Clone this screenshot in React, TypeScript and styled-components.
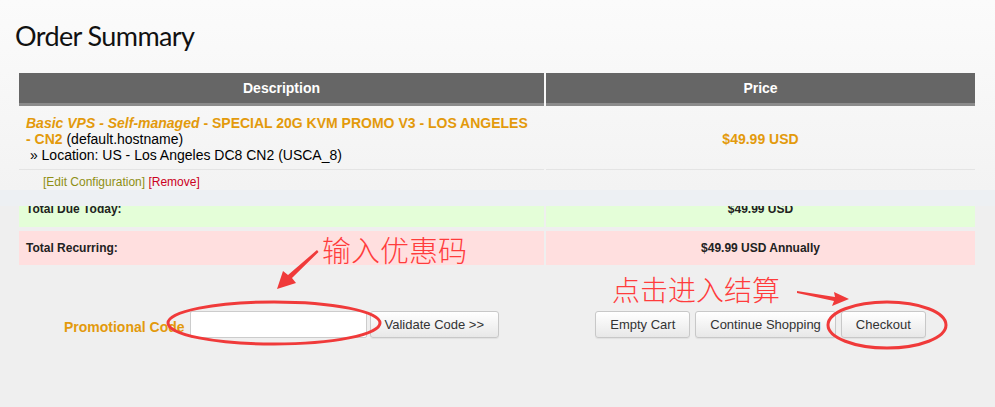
import React from 'react';
import styled, { createGlobalStyle } from 'styled-components';

const GlobalStyle = createGlobalStyle`
  html, body {
    margin: 0;
    padding: 0;
    background: #efefef;
  }
  body {
    font-family: "Liberation Sans", Arial, sans-serif;
  }
`;

const orange = '#e39a0c';

const Page = styled.div`
  position: relative;
  width: 995px;
  height: 407px;
  overflow: hidden;
  background: #efefef;
`;

const Upper = styled.section`
  height: 190px;
  box-sizing: border-box;
  padding-top: 18px;
  background: linear-gradient(#fbfbfb, #f3f3f3);
`;

const Title = styled.h1`
  margin: 0 0 19px 15px;
  font-family: Lato, "Open Sans", sans-serif;
  font-weight: 400;
  font-size: 27px;
  letter-spacing: -0.6px;
  line-height: 36px;
  color: #111;
`;

const Grid = styled.div<{ rowGap?: number }>`
  display: grid;
  grid-template-columns: 525px 429px;
  column-gap: 2px;
  row-gap: ${p => p.rowGap || 0}px;
  width: 956px;
  margin-left: 19px;
`;

const HeadCell = styled.div`
  height: 30px;
  border-bottom: 3px solid #8b8b8b;
  background: #666;
  color: #fff;
  font-weight: bold;
  font-size: 14px;
  display: flex;
  align-items: center;
  justify-content: center;
`;

const ItemCell = styled.div<{ center?: boolean }>`
  height: 64px;
  box-sizing: border-box;
  border-bottom: 1px solid #e4e4e4;
  font-size: 14px;
  line-height: 16px;
  color: #000;
  padding: ${p => (p.center ? '2px 0 0' : '9px 8px 0 7px')};
  display: ${p => (p.center ? 'flex' : 'block')};
  align-items: center;
  justify-content: center;
`;

const ProductGroup = styled.em`
  font-weight: bold;
  color: ${orange};
`;

const ProductName = styled.strong`
  color: ${orange};
`;

const Price = styled.strong`
  color: ${orange};
  font-size: 14px;
`;

const ActionCell = styled.div`
  height: 19px;
  padding: 5px 0 0 24px;
  box-sizing: border-box;
  font-size: 12px;
  line-height: 14px;
`;

const ActionLink = styled.a<{ danger?: boolean }>`
  color: ${p => (p.danger ? '#cc0022' : '#8f8f14')};
  text-decoration: none;
`;

const Band = styled.div`
  height: 16px;
  background: #edf0f3;
`;

const TotalCell = styled.div<{ tone: 'due' | 'recurring'; center?: boolean }>`
  height: ${p => (p.tone === 'due' ? 21 : 34)}px;
  overflow: hidden;
  background: ${p => (p.tone === 'due' ? '#e4fed8' : '#ffdfdf')};
  color: #222;
  font-size: 12px;
  font-weight: bold;
  line-height: 14px;
  padding: 0 7px;
  display: flex;
  align-items: ${p => (p.tone === 'due' ? 'flex-start' : 'center')};
  justify-content: ${p => (p.center ? 'center' : 'flex-start')};
`;

const TotalText = styled.span<{ clipped?: boolean }>`
  margin-top: ${p => (p.clipped ? -4 : 0)}px;
`;

const Lower = styled.div`
  padding-top: 45px;
`;

const ActionGroup = styled.div<{ gap: number }>`
  display: flex;
  align-items: center;
  justify-content: center;
  gap: ${p => p.gap}px;
`;

const PromoLabel = styled.label`
  color: ${orange};
  font-weight: bold;
  font-size: 14px;
  margin-top: 6px;
  margin-right: 2px;
`;

const PromoInput = styled.input`
  width: 177px;
  height: 27px;
  box-sizing: border-box;
  border: 1px solid #ccc;
  border-radius: 2px;
  background: #fff;
  margin: 1px 0 0;
`;

const Button = styled.button`
  height: 27px;
  padding: 0 14px;
  border: 1px solid #c8c8c8;
  border-radius: 3px;
  background: linear-gradient(#ffffff, #e8e8e8);
  box-shadow: 0 1px 1px rgba(0, 0, 0, 0.06);
  color: #333;
  font-family: "Liberation Sans", Arial, sans-serif;
  font-size: 13px;
  cursor: pointer;
`;

const Hint = styled.div<{ size: number }>`
  position: absolute;
  font-family: "Noto Sans CJK SC", sans-serif;
  font-weight: 300;
  font-size: ${p => p.size}px;
  line-height: ${p => p.size}px;
  color: #ff3c3c;
  white-space: nowrap;
`;

const Marks = styled.svg`
  position: absolute;
  left: 0;
  top: 0;
  pointer-events: none;
`;

export default function App() {
  return (
    <Page>
      <GlobalStyle />
      <Upper>
        <Title>Order Summary</Title>
        <Grid>
          <HeadCell>Description</HeadCell>
          <HeadCell>Price</HeadCell>
          <ItemCell>
            <ProductGroup>Basic VPS - Self-managed</ProductGroup>
            <ProductName> - SPECIAL 20G KVM PROMO V3 - LOS ANGELES - CN2</ProductName> (default.hostname)
            <br />
            &nbsp;» Location: US - Los Angeles DC8 CN2 (USCA_8)
          </ItemCell>
          <ItemCell center>
            <Price>$49.99 USD</Price>
          </ItemCell>
          <ActionCell>
            <ActionLink href="#">[Edit Configuration]</ActionLink>{' '}
            <ActionLink href="#" danger>[Remove]</ActionLink>
          </ActionCell>
          <div />
        </Grid>
      </Upper>
      <Band />
      <Grid rowGap={4}>
        <TotalCell tone="due"><TotalText clipped>Total Due Today:</TotalText></TotalCell>
        <TotalCell tone="due" center><TotalText clipped>$49.99 USD</TotalText></TotalCell>
        <TotalCell tone="recurring"><TotalText>Total Recurring:</TotalText></TotalCell>
        <TotalCell tone="recurring" center><TotalText>$49.99 USD Annually</TotalText></TotalCell>
      </Grid>
      <Lower>
        <Grid>
          <ActionGroup gap={3}>
            <PromoLabel htmlFor="promo">Promotional Code</PromoLabel>
            <PromoInput id="promo" type="text" />
            <Button>Validate Code &gt;&gt;</Button>
          </ActionGroup>
          <ActionGroup gap={5}>
            <Button>Empty Cart</Button>
            <Button>Continue Shopping</Button>
            <Button>Checkout</Button>
          </ActionGroup>
        </Grid>
      </Lower>

      <Hint size={29} style={{ left: 322, top: 235 }}>输入优惠码</Hint>
      <Hint size={28} style={{ left: 612, top: 275 }}>点击进入结算</Hint>
      <Marks width="995" height="407" viewBox="0 0 995 407">
        <g fill="none" stroke="#f03a3a" strokeWidth="3">
          <ellipse cx="274" cy="323" rx="106" ry="21" />
          <ellipse cx="887" cy="325" rx="59" ry="23" />
        </g>
        <g fill="#f03a3a">
          <polygon points="317,250 318.5,252 292,278 296,283 277,289 283,271 288,275" />
          <polygon points="797,291 797,293 834,301 832,306 849,299 834,292 835,297" />
        </g>
      </Marks>
    </Page>
  );
}
